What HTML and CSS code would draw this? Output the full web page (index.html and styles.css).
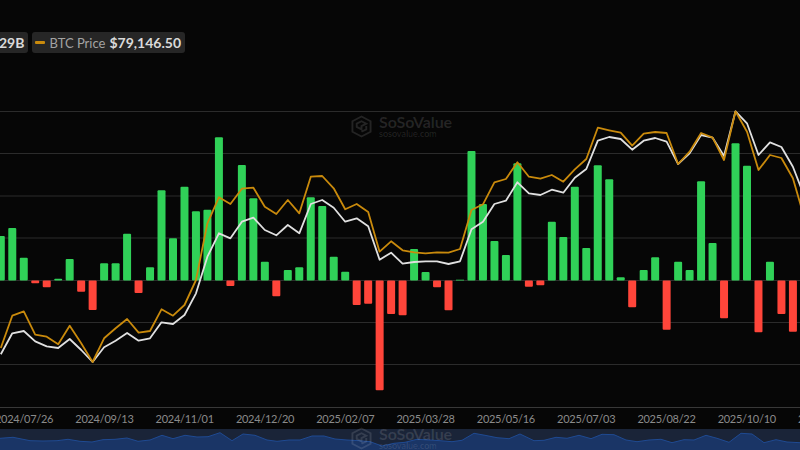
FILE: index.html
```html
<!DOCTYPE html>
<html lang="en">
<head>
<meta charset="utf-8">
<title>BTC Price chart</title>
<link rel="stylesheet" href="styles.css">
</head>
<body>
<main class="page">
  <div class="legend">
    <div class="chip"><span class="value">$1.29B</span></div>
    <div class="chip"><i class="swatch"></i><span class="label">BTC Price</span><span class="value">$79,146.50</span></div>
  </div>
  <svg class="plot" viewBox="0 100 800 308" aria-label="Chart">
    <g class="grid">
      <line x1="0" x2="800" y1="111.5" y2="111.5"/>
      <line x1="0" x2="800" y1="153.5" y2="153.5"/>
      <line x1="0" x2="800" y1="196" y2="196"/>
      <line x1="0" x2="800" y1="238" y2="238"/>
      <line x1="0" x2="800" y1="280.5" y2="280.5"/>
      <line x1="0" x2="800" y1="322.5" y2="322.5"/>
      <line x1="0" x2="800" y1="364.5" y2="364.5"/>
      <line class="axis" x1="0" x2="800" y1="407.5" y2="407.5"/>
    </g>
    <g class="up">
      <rect x="-3.2" y="236" width="8" height="44.5" rx="1"/>
      <rect x="8.28" y="228" width="8" height="52.5" rx="1"/>
      <rect x="19.76" y="257.7" width="8" height="22.8" rx="1"/>
      <rect x="54.2" y="278.7" width="8" height="1.8" rx="1"/>
      <rect x="65.68" y="259" width="8" height="21.5" rx="1"/>
      <rect x="100.12" y="263.3" width="8" height="17.2" rx="1"/>
      <rect x="111.6" y="263.3" width="8" height="17.2" rx="1"/>
      <rect x="123.08" y="233.7" width="8" height="46.8" rx="1"/>
      <rect x="146.04" y="267.3" width="8" height="13.2" rx="1"/>
      <rect x="157.52" y="190.3" width="8" height="90.2" rx="1"/>
      <rect x="169" y="238.3" width="8" height="42.2" rx="1"/>
      <rect x="180.48" y="186.7" width="8" height="93.8" rx="1"/>
      <rect x="191.96" y="211.3" width="8" height="69.2" rx="1"/>
      <rect x="203.44" y="209.7" width="8" height="70.8" rx="1"/>
      <rect x="214.92" y="137.3" width="8" height="143.2" rx="1"/>
      <rect x="237.88" y="165" width="8" height="115.5" rx="1"/>
      <rect x="249.36" y="198.3" width="8" height="82.2" rx="1"/>
      <rect x="260.84" y="261.7" width="8" height="18.8" rx="1"/>
      <rect x="283.8" y="270" width="8" height="10.5" rx="1"/>
      <rect x="295.28" y="267.3" width="8" height="13.2" rx="1"/>
      <rect x="306.76" y="197.3" width="8" height="83.2" rx="1"/>
      <rect x="318.24" y="206" width="8" height="74.5" rx="1"/>
      <rect x="329.72" y="256.7" width="8" height="23.8" rx="1"/>
      <rect x="341.2" y="271.7" width="8" height="8.8" rx="1"/>
      <rect x="410.08" y="249" width="8" height="31.5" rx="1"/>
      <rect x="421.56" y="272" width="8" height="8.5" rx="1"/>
      <rect x="456" y="279.7" width="8" height="0.8"/>
      <rect x="467.48" y="151" width="8" height="129.5" rx="1"/>
      <rect x="478.96" y="204" width="8" height="76.5" rx="1"/>
      <rect x="490.44" y="241" width="8" height="39.5" rx="1"/>
      <rect x="501.92" y="255" width="8" height="25.5" rx="1"/>
      <rect x="513.4" y="163.3" width="8" height="117.2" rx="1"/>
      <rect x="547.84" y="221.7" width="8" height="58.8" rx="1"/>
      <rect x="559.32" y="237" width="8" height="43.5" rx="1"/>
      <rect x="570.8" y="186.7" width="8" height="93.8" rx="1"/>
      <rect x="582.28" y="248" width="8" height="32.5" rx="1"/>
      <rect x="593.76" y="165.3" width="8" height="115.2" rx="1"/>
      <rect x="605.24" y="179.3" width="8" height="101.2" rx="1"/>
      <rect x="616.72" y="277.3" width="8" height="3.2" rx="1"/>
      <rect x="639.68" y="270" width="8" height="10.5" rx="1"/>
      <rect x="651.16" y="257.3" width="8" height="23.2" rx="1"/>
      <rect x="674.12" y="261.7" width="8" height="18.8" rx="1"/>
      <rect x="685.6" y="270" width="8" height="10.5" rx="1"/>
      <rect x="697.08" y="181.3" width="8" height="99.2" rx="1"/>
      <rect x="708.56" y="243" width="8" height="37.5" rx="1"/>
      <rect x="731.52" y="143.3" width="8" height="137.2" rx="1"/>
      <rect x="743" y="165.7" width="8" height="114.8" rx="1"/>
      <rect x="765.96" y="261.7" width="8" height="18.8" rx="1"/>
    </g>
    <g class="down">
      <rect x="31.24" y="280.5" width="8" height="2.8" rx="1"/>
      <rect x="42.72" y="280.5" width="8" height="6.8" rx="1"/>
      <rect x="77.16" y="280.5" width="8" height="11.2" rx="1"/>
      <rect x="88.64" y="280.5" width="8" height="29.5" rx="1"/>
      <rect x="134.56" y="280.5" width="8" height="12.5" rx="1"/>
      <rect x="226.4" y="280.5" width="8" height="5.5" rx="1"/>
      <rect x="272.32" y="280.5" width="8" height="15.8" rx="1"/>
      <rect x="352.68" y="280.5" width="8" height="24.5" rx="1"/>
      <rect x="364.16" y="280.5" width="8" height="23.2" rx="1"/>
      <rect x="375.64" y="280.5" width="8" height="109.8" rx="1"/>
      <rect x="387.12" y="280.5" width="8" height="33.5" rx="1"/>
      <rect x="398.6" y="280.5" width="8" height="34.8" rx="1"/>
      <rect x="433.04" y="280.5" width="8" height="6.8" rx="1"/>
      <rect x="444.52" y="280.5" width="8" height="29.8" rx="1"/>
      <rect x="524.88" y="280.5" width="8" height="6.2" rx="1"/>
      <rect x="536.36" y="280.5" width="8" height="4.8" rx="1"/>
      <rect x="628.2" y="280.5" width="8" height="26.8" rx="1"/>
      <rect x="662.64" y="280.5" width="8" height="49.2" rx="1"/>
      <rect x="720.04" y="280.5" width="8" height="37.8" rx="1"/>
      <rect x="754.48" y="280.5" width="8" height="51.8" rx="1"/>
      <rect x="777.44" y="280.5" width="8" height="33.5" rx="1"/>
      <rect x="788.92" y="280.5" width="8" height="51.2" rx="1"/>
    </g>
    <polyline class="white-line" points="0.8,354.3 12.3,333.3 23.8,331 35.2,341.3 46.7,346.3 58.2,348 69.7,339 81.2,350 92.6,362 104.1,347.3 115.6,340.7 127.1,333 138.6,340.7 150,338.3 161.5,322.3 173,324 184.5,315 196,293.3 207.4,256.7 218.9,233.3 230.4,238.3 241.9,221.7 253.4,217.7 264.8,230 276.3,235.3 287.8,225 299.3,233.3 310.8,204 322.2,200 333.7,207.7 345.2,221.7 356.7,218.3 368.2,226.3 379.6,259.7 391.1,252.7 402.6,263.7 414.1,262 425.6,261.3 437,261.3 448.5,264 460,261.3 471.5,229.3 483,221.7 494.4,204 505.9,200.7 517.4,182.3 528.9,193.3 540.4,195 551.8,189.7 563.3,192.7 574.8,177.7 586.3,169 597.8,140.7 609.2,137 620.7,139 632.2,149.7 643.7,140.7 655.2,138 666.6,141.7 678.1,164 689.6,153.3 701.1,135 712.6,137.7 724,156 735.5,111.3 747,123.3 758.5,155 770,142.3 781.4,147 792.9,166.7 804.4,196.5"/>
    <polyline class="orange-line" points="0.8,348 12.3,315.7 23.8,311.3 35.2,334.7 46.7,336.7 58.2,344.3 69.7,325.7 81.2,343.3 92.6,362 104.1,338.3 115.6,328.3 127.1,319 138.6,332.7 150,331 161.5,309.3 173,315.7 184.5,305 196,280 207.4,223.3 218.9,197.3 230.4,204 241.9,188.7 253.4,187.7 264.8,206.7 276.3,214 287.8,200 299.3,213.3 310.8,176.7 322.2,176 333.7,188.3 345.2,209.3 356.7,204 368.2,212 379.6,251.7 391.1,241.3 402.6,250.3 414.1,252.3 425.6,253.3 437,252.3 448.5,252.7 460,249 471.5,210 483,204.3 494.4,182.3 505.9,179 517.4,162.3 528.9,176.7 540.4,178.7 551.8,175 563.3,181.7 574.8,169.3 586.3,159 597.8,127.7 609.2,130.3 620.7,132.7 632.2,145.7 643.7,133.7 655.2,132 666.6,133 678.1,164 689.6,151.7 701.1,133 712.6,137.7 724,160 735.5,111.3 747,131.7 758.5,170 770,155 781.4,158 792.9,178.3 804.4,218"/>
  </svg>
  <div class="dates">
    <span class="date">2024/07/26</span>
    <span class="date">2024/09/13</span>
    <span class="date">2024/11/01</span>
    <span class="date">2024/12/20</span>
    <span class="date">2025/02/07</span>
    <span class="date">2025/03/28</span>
    <span class="date">2025/05/16</span>
    <span class="date">2025/07/03</span>
    <span class="date">2025/08/22</span>
    <span class="date">2025/10/10</span>
    <span class="date">2025/11/28</span>
  </div>
  <svg class="navigator" viewBox="0 429 800 21" preserveAspectRatio="none" aria-hidden="true">
    <rect class="nav-bg" x="0" y="429" width="800" height="21"/>
    <polygon class="nav-area" points="0,438.3 13,437.3 30,440.7 43,441 57,440.7 68,439.3 80,441.3 92,442 103,439.7 115,439.3 127,438 138,441.3 150,440 162,435.3 173,438.7 185,435.3 197,437 208,436.7 220,432.7 232,440.7 243,434 255,435.3 267,440 277,441.3 289,440 300,440 312,436 324,436 335,439 347,440 359,440.7 370,441.7 382,446 394,443.3 405,442.3 417,439.3 429,440 440,440.7 452,441.7 462,440.3 474,433.3 485,435.3 497,437.7 509,438.7 520,434 534,440.7 544,440.3 556,437.3 567,438.3 579,435.3 591,438.7 602,434.3 614,434.7 626,440 637,441.7 649,440 661,439.3 672,442.7 684,439.7 694,440 706,435.3 717,438.3 729,442.3 741,433.3 752,434 764,442.7 776,439.7 787,442 800,442.7 800,450 0,450"/>
    <polyline class="nav-line" points="0,438.3 13,437.3 30,440.7 43,441 57,440.7 68,439.3 80,441.3 92,442 103,439.7 115,439.3 127,438 138,441.3 150,440 162,435.3 173,438.7 185,435.3 197,437 208,436.7 220,432.7 232,440.7 243,434 255,435.3 267,440 277,441.3 289,440 300,440 312,436 324,436 335,439 347,440 359,440.7 370,441.7 382,446 394,443.3 405,442.3 417,439.3 429,440 440,440.7 452,441.7 462,440.3 474,433.3 485,435.3 497,437.7 509,438.7 520,434 534,440.7 544,440.3 556,437.3 567,438.3 579,435.3 591,438.7 602,434.3 614,434.7 626,440 637,441.7 649,440 661,439.3 672,442.7 684,439.7 694,440 706,435.3 717,438.3 729,442.3 741,433.3 752,434 764,442.7 776,439.7 787,442 800,442.7"/>
  </svg>
  <div class="watermark watermark-top">
    <svg class="mark" viewBox="0 0 22 24" aria-hidden="true">
      <path d="M11 1.5 20.5 6.5V17.5L11 22.5 1.5 17.5V6.5Z"/>
      <path d="M6 9 11 6.5 16 9 11 11.5V15L6 12.5V9ZM16 11.5V15L11 17.5"/>
    </svg>
    <div class="mark-text"><span class="brand">SoSoValue</span><span class="site">sosovalue.com</span></div>
  </div>
  <div class="watermark watermark-bottom">
    <svg class="mark" viewBox="0 0 22 24" aria-hidden="true">
      <path d="M11 1.5 20.5 6.5V17.5L11 22.5 1.5 17.5V6.5Z"/>
      <path d="M6 9 11 6.5 16 9 11 11.5V15L6 12.5V9ZM16 11.5V15L11 17.5"/>
    </svg>
    <div class="mark-text"><span class="brand">SoSoValue</span><span class="site">sosovalue.com</span></div>
  </div>
</main>
</body>
</html>
```
FILE: styles.css
```css
* { box-sizing: border-box; }
html, body { margin: 0; padding: 0; background: #060606; }
body { width: 800px; height: 450px; overflow: hidden; font-family: Lato, "Liberation Sans", sans-serif; }
.page { position: relative; width: 800px; height: 450px; display: flex; flex-direction: column; overflow: hidden; }

.legend { display: flex; justify-content: flex-end; gap: 4px; width: 185px; height: 21px; margin-top: 32px; flex: none; }
.chip { display: flex; align-items: center; flex: none; height: 21px; padding: 0 4px 0 3px; background: #262626; border-radius: 3px; }
.swatch { width: 10px; height: 3px; margin-right: 4px; background: #c98a0c; border-radius: 1px; }
.label { margin-right: 4px; font-size: 13px; color: #a3a3a3; }
.value { font-size: 14px; font-weight: 700; color: #dadada; }

.plot { display: block; flex: none; width: 800px; height: 308px; margin-top: 47px; overflow: hidden; }
.grid line { stroke: #2b2b2b; stroke-width: 1; }
.grid .axis { stroke: #383838; }
.up rect { fill: #30d158; }
.down rect { fill: #ff453a; }
.white-line, .orange-line { fill: none; stroke-width: 1.8; stroke-linejoin: round; }
.white-line { stroke: #e0e0e0; }
.orange-line { stroke: #c98a0c; }

.dates { display: flex; flex: none; height: 21px; margin-left: -5px; align-items: center; }
.date { flex: none; width: 80.3px; font-size: 11px; letter-spacing: -0.28px; color: #8a8a8a; white-space: nowrap; }

.navigator { display: block; flex: none; width: 800px; height: 21px; }
.nav-bg { fill: #1a2438; }
.nav-area { fill: #1a3566; }
.nav-line { fill: none; stroke: #1f4a92; stroke-width: 1; }

.watermark { position: absolute; left: 351px; display: flex; align-items: center; gap: 7px; color: rgba(255,255,255,.12); }
.watermark-top { top: 114px; }
.watermark-bottom { top: 426px; }
.mark { width: 21px; height: 23px; fill: none; stroke: rgba(255,255,255,.12); stroke-width: 2; }
.mark-text { display: flex; flex-direction: column; }
.brand { font-size: 16px; line-height: 16px; font-weight: 700; letter-spacing: -0.1px; }
.site { font-size: 9px; line-height: 8px; }
```
